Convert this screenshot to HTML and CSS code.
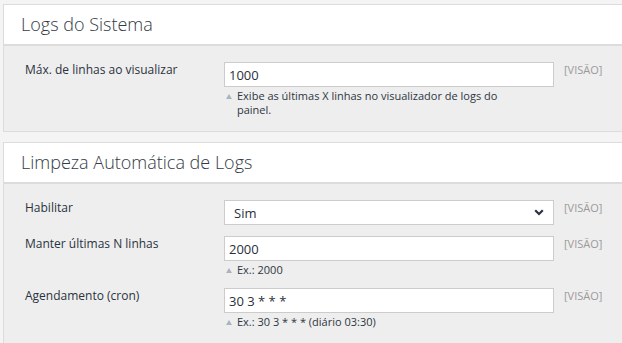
FILE: index.html
```html
<!DOCTYPE html>
<html lang="pt">
<head>
<meta charset="utf-8">
<title>Logs do Sistema</title>
<link rel="stylesheet" href="styles.css">
</head>
<body>
<div class="panel">
  <div class="panel-head"><h2 class="panel-title">Logs do Sistema</h2></div>
  <div class="panel-body">
    <div class="row">
      <label class="label">Máx. de linhas ao visualizar</label>
      <div class="field">
        <input class="input" type="text" value="1000">
        <div class="help"><span class="tri"></span><span>Exibe as últimas X linhas no visualizador de logs do painel.</span></div>
      </div>
      <span class="scope">[VISÃO]</span>
    </div>
  </div>
</div>
<div class="panel">
  <div class="panel-head"><h2 class="panel-title">Limpeza Automática de Logs</h2></div>
  <div class="panel-body">
    <div class="row">
      <label class="label">Habilitar</label>
      <div class="field">
        <div class="select"><span>Sim</span>
          <svg class="chev" width="10" height="7" viewBox="0 0 10 7"><path d="M1.2 1.2 L5 5 L8.8 1.2" fill="none" stroke="#2a3245" stroke-width="2.2"/></svg>
        </div>
      </div>
      <span class="scope">[VISÃO]</span>
    </div>
    <div class="row">
      <label class="label">Manter últimas N linhas</label>
      <div class="field">
        <input class="input" type="text" value="2000">
        <div class="help"><span class="tri"></span><span>Ex.: 2000</span></div>
      </div>
      <span class="scope">[VISÃO]</span>
    </div>
    <div class="row">
      <label class="label">Agendamento (cron)</label>
      <div class="field">
        <input class="input" type="text" value="30 3 * * *">
        <div class="help"><span class="tri"></span><span>Ex.: 30 3 * * * (diário 03:30)</span></div>
      </div>
      <span class="scope">[VISÃO]</span>
    </div>
  </div>
</div>
</body>
</html>
```
FILE: styles.css
```css
html, body {
  margin: 0;
  padding: 0;
  background: #f4f4f4;
  overflow: hidden;
}
body {
  padding: 4px 0 0 3px;
  font-family: "Open Sans", "Noto Sans", sans-serif;
  color: #2d3642;
}
.panel {
  border: 1px solid #dcdcdc;
  border-right: none;
  background: #eeeeee;
  margin-bottom: 10px;
}
.panel-head {
  background: #ffffff;
  height: 39px;
  border-bottom: 2px solid #dcdcdc;
  display: flex;
  align-items: center;
  padding-left: 17px;
}
.panel-title {
  margin: 0;
  font-size: 18px;
  font-weight: 300;
  color: #333a44;
  line-height: 24px;
  padding-bottom: 1px;
}
.panel-body {
  padding: 16px 0 14px 21px;
  display: flex;
  flex-direction: column;
  gap: 11px;
}
.row {
  display: flex;
  align-items: flex-start;
}
.label {
  width: 199px;
  font-size: 12px;
  line-height: 16px;
  color: #2a3340;
}
.field {
  width: 330px;
}
.input, .select {
  box-sizing: border-box;
  width: 330px;
  height: 25px;
  border: 1px solid #cccccc;
  background: #ffffff;
  font-family: "Open Sans", "Noto Sans", sans-serif;
  font-size: 13px;
  color: #2a2f3a;
  padding: 0 4px;
  margin: 0;
  display: block;
  outline: none;
}
.select {
  display: flex;
  align-items: center;
  justify-content: space-between;
  padding: 0 9px 0 9px;
}
.chev { display: block; }
.help {
  display: flex;
  align-items: flex-start;
  margin-top: 2px;
  font-size: 11px;
  line-height: 14px;
  color: #2d3642;
}
.help span:last-child { width: 270px; }
.tri {
  width: 0;
  height: 0;
  border-left: 3.5px solid transparent;
  border-right: 3.5px solid transparent;
  border-bottom: 5px solid #aab4bc;
  margin: 5px 5px 0 2px;
  flex: none;
}
.scope {
  margin-left: 10px;
  font-size: 11px;
  line-height: 16px;
  color: #9a9a9a;
}
```
